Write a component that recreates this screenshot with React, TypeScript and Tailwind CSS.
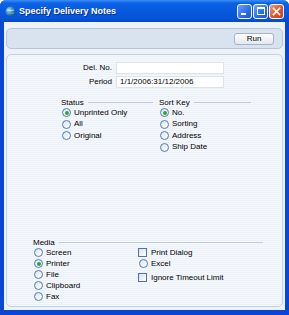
import React from 'react';

const Radio: React.FC<{ checked?: boolean }> = ({ checked }) => (
    <span className="w-[9px] h-[9px] shrink-0 rounded-full border border-[#4d7db5] bg-[linear-gradient(135deg,#dfe3e8,#ffffff)] flex items-center justify-center">
        {checked && <span className="w-[4px] h-[4px] rounded-full bg-[#32a532]" />}
    </span>
);

const Check: React.FC = () => (
    <span className="w-[9px] h-[9px] shrink-0 border border-[#4f74a3] bg-[linear-gradient(135deg,#dcdfe4,#ffffff)]" />
);

const Option: React.FC<{ label: string; checked?: boolean; h?: string }> = ({ label, checked, h = 'h-[11.5px]' }) => (
    <div className={`${h} flex items-center gap-[3px] pl-[1px]`}>
        <Radio checked={checked} />
        <span className="leading-none">{label}</span>
    </div>
);

const Header: React.FC<{ title: string }> = ({ title }) => (
    <div className="h-[9px] flex items-center gap-[4px]">
        <span className="leading-none">{title}</span>
        <span className="flex-1 h-px bg-[#c3c9d2]" />
    </div>
);

const App: React.FC = () => {
    return (
        <div className="w-[289px] h-[315px] flex flex-col rounded-t-[6px] overflow-hidden bg-[#0a46d6] font-['Liberation_Sans',Arial,sans-serif] text-[8px] text-black">
            {/* title bar */}
            <div className="h-[22px] shrink-0 flex items-center pl-[5px] pr-[5px] bg-[linear-gradient(to_bottom,#3d8ff5_0%,#0b62e6_14%,#0759dd_50%,#0654d8_85%,#0448c8_100%)]">
                <svg width="11" height="11" viewBox="0 0 12 12" className="shrink-0">
                    <defs>
                        <radialGradient id="g" cx="35%" cy="35%" r="70%">
                            <stop offset="0%" stopColor="#a9dcf5" />
                            <stop offset="50%" stopColor="#3c8fc4" />
                            <stop offset="100%" stopColor="#164f7e" />
                        </radialGradient>
                    </defs>
                    <circle cx="6" cy="6" r="5.5" fill="url(#g)" />
                    <path d="M2 5 C4 3.5 6 6 9.5 4.5" stroke="#cfeeff" strokeWidth="0.9" fill="none" />
                    <path d="M2.5 8 C5 6.5 7 9 10 7.5" stroke="#6fb4dc" strokeWidth="0.9" fill="none" />
                </svg>
                <span className="ml-[3px] text-white font-bold text-[9px] leading-none [text-shadow:1px_1px_0_#0a2f8a]">Specify Delivery Notes</span>
                <div className="ml-auto flex gap-[1px]">
                    <div className="w-[15px] h-[15px] rounded-[3px] border border-white bg-[linear-gradient(135deg,#6aa2ff,#2a6af0_60%,#1a55db)] flex items-end pl-[3px] pb-[3px]">
                        <span className="w-[5px] h-[2px] bg-white" />
                    </div>
                    <div className="w-[15px] h-[15px] rounded-[3px] border border-white bg-[linear-gradient(135deg,#6aa2ff,#2a6af0_60%,#1a55db)] flex items-center justify-center">
                        <span className="w-[8px] h-[8px] border border-white border-t-2" />
                    </div>
                    <div className="w-[15px] h-[15px] rounded-[3px] border border-white bg-[linear-gradient(135deg,#f39a7a,#e0552c_55%,#c8401c)] flex items-center justify-center">
                        <svg width="9" height="9" viewBox="0 0 9 9">
                            <path d="M1.5 1.5 L7.5 7.5 M7.5 1.5 L1.5 7.5" stroke="white" strokeWidth="1.6" strokeLinecap="square" />
                        </svg>
                    </div>
                </div>
            </div>

            {/* body */}
            <div className="flex-1 ml-[4px] mr-[4px] mb-[5px] bg-[#edf1f8] flex flex-col pl-[2px] pr-[2px] pt-[6px] pb-[3px]">
                <div className="h-[21px] shrink-0 rounded-[5px] border border-[#b7c6dc] bg-[#d9e2ef] flex items-center justify-end pr-[8px]">
                    <button className="w-[40px] h-[12px] rounded-[3px] border border-[#a7b4c6] bg-[linear-gradient(to_bottom,#ffffff,#e3e8f0)] text-[8px] leading-none">
                        Run
                    </button>
                </div>

                <div className="flex-1 mt-[5px] rounded-[5px] border border-[#c2d0e4] bg-[repeating-linear-gradient(to_bottom,#f4f7fb_0px,#f4f7fb_1px,#edf1f8_1px,#edf1f8_2px)] flex flex-col pt-[7px] pb-[4px]">
                    <div className="grid grid-cols-[105px_108px] gap-x-[4px] gap-y-[2px] items-center">
                        <span className="text-right leading-none">Del. No.</span>
                        <div className="h-[12px] bg-white border border-[#dde3ec]" />
                        <span className="text-right leading-none">Period</span>
                        <div className="h-[12px] bg-white border border-[#dde3ec] flex items-center pl-[3px] leading-none">1/1/2006:31/12/2006</div>
                    </div>

                    <div className="flex gap-[6px] pl-[54px] mt-[10px]">
                        <div className="w-[92px] flex flex-col">
                            <Header title="Status" />
                            <Option label="Unprinted Only" checked />
                            <Option label="All" />
                            <Option label="Original" />
                        </div>
                        <div className="w-[92px] flex flex-col">
                            <Header title="Sort Key" />
                            <Option label="No." checked />
                            <Option label="Sorting" />
                            <Option label="Address" />
                            <Option label="Ship Date" />
                        </div>
                    </div>

                    <div className="mt-auto pl-[26px] pr-[19px] flex flex-col">
                        <Header title="Media" />
                        <div className="flex">
                            <div className="w-[105px] flex flex-col">
                                <Option label="Screen" h="h-[11px]" />
                                <Option label="Printer" checked h="h-[11px]" />
                                <Option label="File" h="h-[11px]" />
                                <Option label="Clipboard" h="h-[11px]" />
                                <Option label="Fax" h="h-[11px]" />
                            </div>
                            <div className="flex flex-col">
                                <div className="h-[11px] flex items-center gap-[4px]">
                                    <Check />
                                    <span className="leading-none">Print Dialog</span>
                                </div>
                                <Option label="Excel" h="h-[11px]" />
                                <div className="h-[11px] mt-[3px] flex items-center gap-[4px]">
                                    <Check />
                                    <span className="leading-none">Ignore Timeout Limit</span>
                                </div>
                            </div>
                        </div>
                    </div>
                </div>
            </div>
        </div>
    );
};

export default App;
